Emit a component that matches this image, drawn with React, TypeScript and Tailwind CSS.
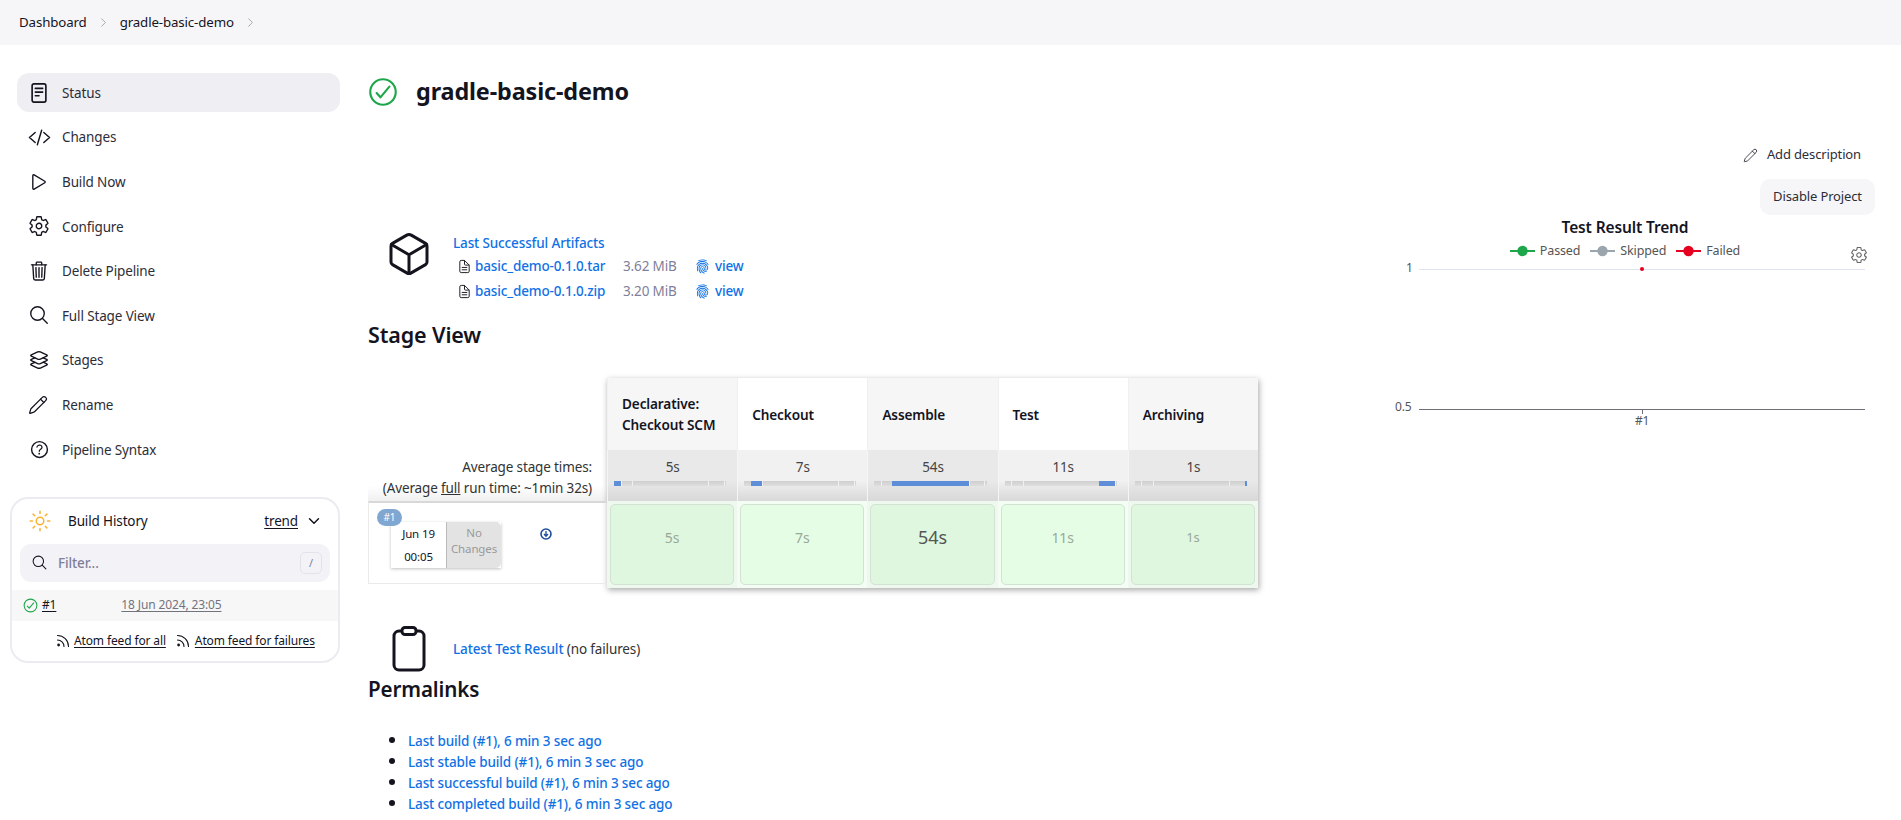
import type { ReactNode } from 'react';
import {
  IoCheckmarkCircleOutline,
  IoChevronDown,
  IoCodeSlashOutline,
  IoCubeOutline,
  IoDocumentTextOutline,
  IoFingerPrint,
  IoHelpCircleOutline,
  IoLayersOutline,
  IoPlayOutline,
  IoSearchOutline,
  IoSettingsOutline,
  IoSunnyOutline,
  IoTrashOutline,
} from 'react-icons/io5';
import { Pencil, ChevronRight } from 'lucide-react';

const StatusIcon = () => (
  <svg viewBox="0 0 24 24" className="w-[22px] h-[22px]" fill="none" stroke="currentColor" strokeWidth="1.8" strokeLinecap="round">
    <rect x="4.5" y="2" width="15" height="20" rx="2" />
    <path d="M8 7h8M8 11h8M8 15h4" />
  </svg>
);

const ClipboardIcon = () => (
  <svg viewBox="0 0 34 46" className="w-[34px] h-[46px]" fill="none" stroke="#14141f" strokeWidth="3" strokeLinejoin="round">
    <rect x="2" y="5" width="30" height="39" rx="5" />
    <rect x="10" y="1.5" width="14" height="7" rx="3" fill="#fff" />
  </svg>
);

const RssIcon = ({ className = '' }: { className?: string }) => (
  <svg viewBox="0 0 14 14" className={`w-[14px] h-[14px] ${className}`} fill="none" stroke="#14141f" strokeWidth="1.1" strokeLinecap="round">
    <circle cx="2.6" cy="11" r="1.4" fill="#14141f" stroke="none" />
    <path d="M1.5 6a6.5 6.5 0 0 1 6.5 6.5" />
    <path d="M1.5 1.5a11 11 0 0 1 11 11" />
  </svg>
);

const BuildArrow = () => (
  <svg viewBox="0 0 12 12" className="absolute left-[171px] top-[25px] w-[12px] h-[12px]" fill="none" stroke="#1f4e9c" strokeWidth="1.6">
    <circle cx="6" cy="6" r="5" />
    <path d="M6 3v5M4 6l2 2.2L8 6" strokeWidth="1.3" />
  </svg>
);

const sideItems: { label: string; icon: ReactNode; active?: boolean }[] = [
  { label: 'Status', icon: <StatusIcon />, active: true },
  { label: 'Changes', icon: <IoCodeSlashOutline size={23} /> },
  { label: 'Build Now', icon: <IoPlayOutline size={22} /> },
  { label: 'Configure', icon: <IoSettingsOutline size={22} /> },
  { label: 'Delete Pipeline', icon: <IoTrashOutline size={22} /> },
  { label: 'Full Stage View', icon: <IoSearchOutline size={22} /> },
  { label: 'Stages', icon: <IoLayersOutline size={22} /> },
  { label: 'Rename', icon: <Pencil size={20} strokeWidth={1.5} /> },
  { label: 'Pipeline Syntax', icon: <IoHelpCircleOutline size={23} /> },
];

const stages = [
  { name: 'Declarative: Checkout SCM', avg: '5s', cell: '5s', size: 'text-[14px] text-[#9aa89a]', shade: true, left: 0, width: 6 },
  { name: 'Checkout', avg: '7s', cell: '7s', size: 'text-[14px] text-[#9aa89a]', shade: false, left: 6, width: 10 },
  { name: 'Assemble', avg: '54s', cell: '54s', size: 'text-[18px] text-[#555]', shade: true, left: 16, width: 68 },
  { name: 'Test', avg: '11s', cell: '11s', size: 'text-[14px] text-[#9aa89a]', shade: false, left: 84, width: 14 },
  { name: 'Archiving', avg: '1s', cell: '1s', size: 'text-[13px] text-[#9aa89a]', shade: true, left: 98, width: 2 },
];

const artifacts = [
  { name: 'basic_demo-0.1.0.tar', size: '3.62 MiB' },
  { name: 'basic_demo-0.1.0.zip', size: '3.20 MiB' },
];

const permalinks = [
  'Last build (#1), 6 min 3 sec ago',
  'Last stable build (#1), 6 min 3 sec ago',
  'Last successful build (#1), 6 min 3 sec ago',
  'Last completed build (#1), 6 min 3 sec ago',
];

function LegendItem({ color, label }: { color: string; label: string }) {
  return (
    <span className="flex items-center gap-[5px]">
      <svg width="25" height="12" viewBox="0 0 25 12">
        <path d="M0 6h25" stroke={color} strokeWidth="2" />
        <circle cx="12.5" cy="6" r="5.2" fill={color} />
      </svg>
      <span className="text-[12.5px] leading-none text-[#555]">{label}</span>
    </span>
  );
}

export default function App() {
  return (
    <div className="h-screen overflow-hidden bg-white text-[#14141f] text-[13.5px] tracking-[-0.01em] [font-family:'Noto_Sans',sans-serif]">
      <div className="h-[45px] bg-[#f6f6f8] flex items-center pl-[19px] text-[13.3px]">
        <span>Dashboard</span>
        <ChevronRight size={15} strokeWidth={1.2} className="mx-[9px] text-[#8f8f9c]" />
        <span>gradle-basic-demo</span>
        <ChevronRight size={15} strokeWidth={1.2} className="mx-[9px] text-[#8f8f9c]" />
      </div>

      <div className="flex">
        {/* Sidebar */}
        <aside className="w-[368px] shrink-0 pl-[10px] pr-[28px] pt-[28px]">
          <nav className="pl-[7px]">
            {sideItems.map((item) => (
              <div
                key={item.label}
                className={`h-[39px] mb-[5.6px] flex items-center rounded-[12px] text-[#2d2d38] ${item.active ? 'bg-[#eeeef3]' : ''}`}
              >
                <span className="w-[45px] pl-[11px] flex text-[#14141f]">{item.icon}</span>
                <span className="pt-[1px]">{item.label}</span>
              </div>
            ))}
          </nav>

          <div className="mt-[28px] w-[330px] h-[166px] rounded-[18px] border-2 border-[#ebebf1] overflow-hidden">
            <div className="h-[44px] flex items-center pl-[16px] pr-[16px]">
              <IoSunnyOutline size={24} className="text-[#f9b233]" />
              <span className="ml-[16px]">Build History</span>
              <span className="ml-auto underline underline-offset-2">trend</span>
              <IoChevronDown size={16} className="ml-[8px]" />
            </div>
            <div className="mt-[1px] mx-[8px] h-[38px] rounded-[11px] bg-[#f3f3f7] flex items-center pl-[11px] pr-[8px]">
              <IoSearchOutline size={17} />
              <span className="ml-[10px] font-medium text-[#7f7f98]">Filter...</span>
              <span className="ml-auto w-[22px] h-[22px] rounded-[5px] border border-[#e3e3ea] flex items-center justify-center text-[11px] text-[#7f7f98]">/</span>
            </div>
            <div className="mt-[8px] h-[31px] bg-[#f7f7f8] flex items-center pl-[10px] text-[12px]">
              <IoCheckmarkCircleOutline size={17} className="text-[#1ea64a]" />
              <span className="ml-[3px] underline underline-offset-2">#1</span>
              <span className="ml-[65px] underline underline-offset-2 text-[#73737f]">18 Jun 2024, 23:05</span>
            </div>
            <div className="h-[40px] flex items-center pl-[44px] text-[12px]">
              <RssIcon />
              <span className="ml-[4px] underline underline-offset-2">Atom feed for all</span>
              <RssIcon className="ml-[10px]" />
              <span className="ml-[5px] underline underline-offset-2">Atom feed for failures</span>
            </div>
          </div>
        </aside>

        {/* Main */}
        <main className="flex-1 min-w-0 pr-[26px]">
          <div className="flex items-center h-[30px] mt-[32px]">
            <IoCheckmarkCircleOutline size={34} className="-ml-[2px] text-[#1ea64a]" />
            <h1 className="ml-[16px] text-[23.4px] font-bold">gradle-basic-demo</h1>
          </div>

          <div className="flex">
            <div className="w-[1010px] shrink-0">
              <div className="mt-[118px] h-[83px] flex">
                <div className="w-[85px] pl-[17px] pt-[5px]">
                  <IoCubeOutline size={48} />
                </div>
                <div className="pt-[10px]">
                  <a className="block h-[16px] leading-[16px] font-medium text-[#1071e5]">Last Successful Artifacts</a>
                  <div className="mt-[3px]">
                    {artifacts.map((a) => (
                      <div key={a.name} className="flex items-center h-[25px]">
                        <IoDocumentTextOutline size={15} className="ml-[4px]" />
                        <a className="ml-[3px] w-[148px] font-medium text-[#1071e5]">{a.name}</a>
                        <span className="w-[72px] text-[#7f7f98]">{a.size}</span>
                        <IoFingerPrint size={15} className="text-[#1071e5]" />
                        <a className="ml-[5px] font-medium text-[#1071e5]">view</a>
                      </div>
                    ))}
                  </div>
                </div>
              </div>

              <h2 className="mt-[12px] h-[30px] text-[21.5px] font-semibold leading-[30px]">Stage View</h2>

              {/* Stage table */}
              <div className="mt-[28px] flex">
                <div className="w-[239px] shrink-0 pt-[72px]">
                  <div className="h-[51px] pr-[15px] text-right text-[13.5px] leading-[21px] text-[#333] pt-[7px] bg-gradient-to-b from-white from-70% to-[#f0f0f0]">
                    <div>Average stage times:</div>
                    <div>
                      (Average <span className="underline">full</span> run time: ~1min 32s)
                    </div>
                  </div>
                  <div className="h-[83px] border border-[#eaeaea] border-t-2 border-t-[#d8d8d8] border-r-0 flex relative">
                    <span className="absolute left-[8px] top-[6px] w-[25px] text-center h-[17px] rounded-full bg-[#7fa7d2] text-white text-[10px] leading-[17px]">#1</span>
                    <div className="ml-[22px] mt-[19px] h-[46px] flex text-[11.5px] shadow-[0_1px_3px_rgba(0,0,0,0.25)]">
                      <div className="w-[55px] bg-white text-center leading-[23px]">
                        <div>Jun 19</div>
                        <div>00:05</div>
                      </div>
                      <div className="w-[55px] bg-[#e3e3e3] rounded-r-[5px] border-l border-[#bbb] text-center leading-[16px] text-[#9a9a9a] pt-[3px]">
                        <div>No</div>
                        <div>Changes</div>
                      </div>
                    </div>
                    <BuildArrow />
                  </div>
                </div>

                <div className="w-[651px] shrink-0 flex shadow-[1px_2px_6px_rgba(0,0,0,0.35)]">
                  {stages.map((s) => (
                    <div key={s.name} className="w-[130.2px]">
                      <div className={`h-[72px] px-[14px] flex items-center text-[13.6px] font-semibold leading-[21px] border-l border-[#f0f0f0] ${s.shade ? 'bg-[#f6f6f6]' : 'bg-white'}`}>
                        {s.name}
                      </div>
                      <div className={`h-[51px] px-[6px] text-center border-l border-[#f5f5f5] bg-gradient-to-b to-[#d8d8d8] ${s.shade ? 'from-[#e9e9e9] via-[#e9e9e9] via-60%' : 'from-[#f1f1f1] via-[#f1f1f1] via-60%'}`}>
                        <div className="pt-[8px] h-[31px] text-[13.5px] leading-[18px] text-[#444]">{s.avg}</div>
                        <div className="relative h-[5px] mr-[5px] bg-gradient-to-b from-[#cfcfcf] to-[#dedede]">
                          {[6, 16, 84, 98].map((p) => (
                            <div key={p} className="absolute top-0 bottom-0 w-[1px] bg-[#f0f0f0]" style={{ left: `${p}%` }} />
                          ))}
                          <div className="absolute top-0 bottom-0 bg-[#5f8ed8]" style={{ left: `${s.left}%`, width: `${s.width}%` }} />
                        </div>
                      </div>
                      <div className={`h-[87px] p-[3px] ${s.shade ? 'bg-[#eef8ee]' : 'bg-[#f3fdf3]'}`}>
                        <div className={`h-[81px] pb-[14px] rounded-[5px] border border-[#d3e3d3] flex items-center justify-center ${s.size} ${s.shade ? 'bg-[#dff7df]' : 'bg-[#e4fde4]'}`}>
                          {s.cell}
                        </div>
                      </div>
                    </div>
                  ))}
                </div>
              </div>

              {/* Test result */}
              <div className="mt-[38px] h-[46px] flex">
                <div className="w-[85px] pl-[24px]">
                  <ClipboardIcon />
                </div>
                <div className="pt-[13px]">
                  <a className="font-medium text-[#1071e5]">Latest Test Result</a>
                  <span className="text-[#333]"> (no failures)</span>
                </div>
              </div>

              <h2 className="mt-[2px] h-[30px] text-[20.6px] font-semibold leading-[30px]">Permalinks</h2>

              <ul className="mt-[25px] pl-[40px] list-disc">
                {permalinks.map((p) => (
                  <li key={p} className="h-[21px] leading-[21px] font-medium text-[#1071e5] marker:text-[#14141f] marker:text-[18px]">
                    {p}
                  </li>
                ))}
              </ul>
            </div>

            {/* Right column */}
            <div className="flex-1 min-w-0">
              <div className="mt-[37px] h-[22px] flex items-center justify-end pr-[14px] text-[13px] text-[#2d2d38]">
                <Pencil size={15} strokeWidth={1.4} className="mr-[9px]" />
                Add description
              </div>
              <div className="flex justify-end mt-[13px]">
                <div className="w-[115px] h-[36px] rounded-[10px] bg-[#f6f6f8] flex items-center justify-center text-[13px] text-[#2d2d38]">Disable Project</div>
              </div>
              <div className="mt-[2px] text-center pr-[3px]">
                <div className="text-[15.5px] font-semibold leading-[20px]">Test Result Trend</div>
              </div>
              <div className="relative h-[200px]">
                <div className="pt-[8px] flex justify-center gap-[10px] pr-[3px]">
                  <LegendItem color="#1ea64a" label="Passed" />
                  <LegendItem color="#9aa5ad" label="Skipped" />
                  <LegendItem color="#e6001f" label="Failed" />
                </div>
                <IoSettingsOutline size={18} className="absolute right-[7px] top-[9px] text-[#666]" />
                <span className="absolute left-[28px] top-[23px] text-[12px] leading-4 text-[#555]">1</span>
                <div className="absolute left-[41px] w-[446px] top-[32px] h-[1px] bg-[#e0e6f1]" />
                <div className="absolute left-[262px] top-[30px] w-[4px] h-[4px] rounded-full bg-[#e6001f]" />
                <span className="absolute left-[17px] top-[162px] text-[12px] leading-4 text-[#555]">0.5</span>
                <div className="absolute left-[41px] w-[446px] top-[172px] h-[1px] bg-[#6e7079]" />
                <div className="absolute left-[264px] top-[172px] w-[1px] h-[5px] bg-[#6e7079]" />
                <span className="absolute left-[257px] top-[176px] text-[12px] leading-4 text-[#555]">#1</span>
              </div>
            </div>
          </div>
        </main>
      </div>
    </div>
  );
}
